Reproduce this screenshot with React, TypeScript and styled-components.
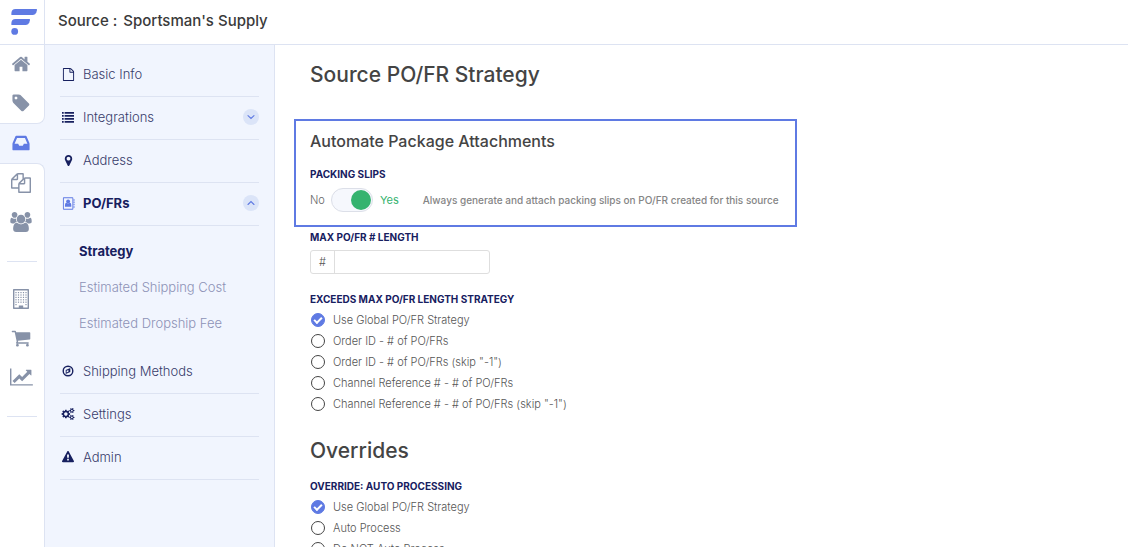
import React from "react";
import styled, { createGlobalStyle, css } from "styled-components";

const color = {
  brand: "#5f7ae3",
  navy: "#17205f",
  menu: "#383c6b",
  muted: "#8d92b6",
  rail: "#8792a8",
  panel: "#f1f5fe",
  line: "#dde3f2",
  heading: "#444444",
  text: "#555555",
  green: "#35b36f",
};

const GlobalStyle = createGlobalStyle`
  *, *::before, *::after { box-sizing: border-box; }
  body {
    margin: 0;
    background: #fff;
    color: ${color.text};
    font-family: Inter, "Liberation Sans", sans-serif;
    font-size: 11px;
    font-weight: 300;
    line-height: 16px;
  }
`;

/* ---------- icons ---------- */

const Glyph = styled.svg<{ $size: number; $ratio?: number }>`
  display: block;
  flex: none;
  height: ${(p) => p.$size}px;
  width: ${(p) => p.$size * (p.$ratio ?? 1)}px;
  fill: currentColor;
  overflow: visible;
`;

type IconProps = { size: number };

const path = (d: string, ratio = 1) =>
  function PathIcon({ size }: IconProps) {
    return (
      <Glyph $size={size} $ratio={ratio} viewBox={`0 0 ${1792 * ratio} 1792`} aria-hidden="true">
        <path d={d} fillRule="nonzero" />
      </Glyph>
    );
  };

const HomeIcon = path(
  "M1472 992v480q0 26-19 45t-45 19h-384v-384h-256v384h-384q-26 0-45-19t-19-45v-480q0-1 .5-3t.5-3l575-474 575 474q1 2 1 6zm223-69l-62 74q-8 9-21 11h-3q-13 0-21-7l-692-577-692 577q-12 8-24 7-13-2-21-11l-62-74q-8-10-7-23.5t11-21.5l719-599q32-26 76-26t76 26l244 204v-195q0-14 9-23t23-9h192q14 0 23 9t9 23v408l219 182q10 8 11 21.5t-7 23.5z"
);
const TagIcon = path(
  "M576 448q0-53-37.5-90.5t-90.5-37.5-90.5 37.5-37.5 90.5 37.5 90.5 90.5 37.5 90.5-37.5 37.5-90.5zm1067 576q0 53-37 90l-491 492q-39 37-91 37-53 0-90-37l-715-716q-38-37-64.5-101t-26.5-117v-416q0-52 38-90t90-38h416q53 0 117 26.5t102 64.5l715 714q37 39 37 91z"
);
const InboxIcon = path(
  "M1151 960h316q-1-3-2.5-8.5t-2.5-7.5l-212-496h-708l-212 496q-1 3-2.5 8.5t-2.5 7.5h316l95 192h320zm513 30v482q0 26-19 45t-45 19h-1408q-26 0-45-19t-19-45v-482q0-62 25-123l238-552q10-25 36.5-42t52.5-17h832q26 0 52.5 17t36.5 42l238 552q25 61 25 123z"
);
const FilesIcon = path(
  "M1696 384q40 0 68 28t28 68v1216q0 40-28 68t-68 28h-960q-40 0-68-28t-28-68v-288h-544q-40 0-68-28t-28-68v-672q0-40 20-88t48-76l408-408q28-28 76-48t88-20h416q40 0 68 28t28 68v328q68-40 128-40h416zm-544 213l-299 299h299v-299zm-640-384l-299 299h299v-299zm196 647l316-316v-416h-384v416q0 40-28 68t-68 28h-416v640h512v-256q0-40 20-88t48-76zm956 804v-1152h-384v416q0 40-28 68t-68 28h-416v640h896z"
);
const UsersIcon = path(
  "M529 896q-162 5-265 128h-134q-82 0-138-40.5t-56-118.5q0-353 124-353 6 0 43.5 21t97.5 42.5 119 21.5q67 0 133-23-5 37-5 66 0 139 81 256zm1071 637q0 120-73 189.5t-194 69.5h-874q-121 0-194-69.5t-73-189.5q0-53 3.5-103.5t14-109 26.5-108.5 43-97.5 62-81 85.5-53.5 111.5-20q10 0 43 21.5t73 48 107 48 135 21.5 135-21.5 107-48 73-48 43-21.5q61 0 111.5 20t85.5 53.5 62 81 43 97.5 26.5 108.5 14 109 3.5 103.5zm-1024-1277q0 106-75 181t-181 75-181-75-75-181 75-181 181-75 181 75 75 181zm704 384q0 159-112.5 271.5t-271.5 112.5-271.5-112.5-112.5-271.5 112.5-271.5 271.5-112.5 271.5 112.5 112.5 271.5zm576 225q0 78-56 118.5t-138 40.5h-134q-103-123-265-128 81-117 81-256 0-29-5-66 66 23 133 23 59 0 119-21.5t97.5-42.5 43.5-21q124 0 124 353zm-128-609q0 106-75 181t-181 75-181-75-75-181 75-181 181-75 181 75 75 181z"
);
const CartIcon = path(
  "M704 1536q0 52-38 90t-90 38-90-38-38-90 38-90 90-38 90 38 38 90zm896 0q0 52-38 90t-90 38-90-38-38-90 38-90 90-38 90 38 38 90zm128-1088v512q0 24-16.5 42.5t-40.5 21.5l-1044 122q13 60 13 70 0 16-24 64h920q26 0 45 19t19 45-19 45-45 19h-1024q-26 0-45-19t-19-45q0-11 8-31.5t16-36 21.5-40 15.5-29.5l-177-823h-204q-26 0-45-19t-19-45 19-45 45-19h256q16 0 28.5 6.5t19.5 15.5 13 24.5 8 26 5.5 29.5 4.5 26h1201q26 0 45 19t19 45z"
);
const ChartIcon = path(
  "M2048 1536v128h-2048v-1536h128v1408h1920zm-128-1248v435q0 21-19.5 29.5t-35.5-7.5l-121-121-633 633q-10 10-23 10t-23-10l-233-233-416 416-192-192 585-585q10-10 23-10t23 10l233 233 464-464-121-121q-16-16-7.5-35.5t29.5-19.5h435q14 0 23 9t9 23z",
  8 / 7
);
const FileIcon = path(
  "M1596 380q28 28 48 76t20 88v1152q0 40-28 68t-68 28h-1344q-40 0-68-28t-28-68v-1600q0-40 28-68t68-28h896q40 0 88 20t76 48zm-444-244v376h376q-10-29-22-41l-313-313q-12-12-41-22zm384 1528v-1024h-416q-40 0-68-28t-28-68v-416h-768v1536h1280z"
);
const MarkerIcon = path(
  "M1152 640q0-106-75-181t-181-75-181 75-75 181 75 181 181 75 181-75 75-181zm256 0q0 109-33 179l-364 774q-16 33-47.5 52t-67.5 19-67.5-19-46.5-52l-365-774q-33-70-33-179 0-212 150-362t362-150 362 150 150 362z"
);
const WarningIcon = path(
  "M1024 1375v-190q0-14-9.5-23.5t-22.5-9.5h-192q-13 0-22.5 9.5t-9.5 23.5v190q0 14 9.5 23.5t22.5 9.5h192q13 0 22.5-9.5t9.5-23.5zm-2-374l18-459q0-12-10-19-13-11-24-11h-220q-11 0-24 11-10 7-10 21l17 457q0 10 10 16.5t24 6.5h185q14 0 23.5-6.5t10.5-16.5zm-14-934l768 1408q35 63-2 126-17 29-46.5 46t-63.5 17h-1536q-34 0-63.5-17t-46.5-46q-37-63-2-126l768-1408q17-31 47-49t65-18 65 18 47 49z"
);

const smallCog =
  "v140q0 16-149 31-12 27-30 52 51 113 51 138 0 4-4 7-122 71-124 71-8 0-46-47t-52-68q-20 2-30 2t-30-2q-14 21-52 68t-46 47q-2 0-124-71-4-3-4-7 0-25 51-138-18-25-30-52-149-15-149-31v-140q0-16 149-31 13-29 30-52-51-113-51-138 0-4 4-7 4-2 35-20t59-34 30-16q8 0 46 46.5t52 67.5q20-2 30-2t30 2q51-71 92-112l6-2q4 0 124 70 4 3 4 7 0 25-51 138 17 23 30 52 149 15 149 31z";
const CogsIcon = path(
  "M832 896q0-106-75-181t-181-75-181 75-75 181 75 181 181 75 181-75 75-181zm768 512q0-52-38-90t-90-38-90 38-38 90q0 53 37.5 90.5t90.5 37.5 90.5-37.5 37.5-90.5zm0-1024q0-52-38-90t-90-38-90 38-38 90q0 53 37.5 90.5t90.5 37.5 90.5-37.5 37.5-90.5zm-384 421v185q0 10-7 19.5t-16 10.5l-155 24q-11 35-32 76 34 48 90 115 7 11 7 20 0 12-7 19-23 30-82.5 89.5t-78.5 59.5q-11 0-21-7l-115-90q-37 19-77 31-11 108-23 155-7 24-30 24h-186q-11 0-20-7.5t-10-17.5l-23-153q-34-10-75-31l-118 89q-7 7-20 7-11 0-21-8-144-133-144-160 0-9 7-19 10-14 41-53t47-61q-23-44-35-82l-152-24q-10-1-17-9.5t-7-19.5v-185q0-10 7-19.5t16-10.5l155-24q11-35 32-76-34-48-90-115-7-11-7-20 0-12 7-20 22-30 82-89t79-59q11 0 21 7l115 90q34-18 77-32 11-108 23-154 7-24 30-24h186q11 0 20 7.5t10 17.5l23 153q34 10 75 31l118-89q8-7 20-7 11 0 21 8 144 133 144 160 0 9-7 19-12 16-42 54t-45 60q23 48 34 82l152 23q10 2 17 10.5t7 19.5zm640 533" +
    smallCog +
    "m0-1024" +
    smallCog
);

function BuildingIcon({ size }: IconProps) {
  const cells = [];
  for (let row = 0; row < 6; row++) {
    for (let col = 0; col < 5; col++) {
      if (row === 5 && col > 0 && col < 4) continue;
      cells.push(<rect key={`${row}-${col}`} x={4.4 + col * 2.5} y={3 + row * 2.4} width="1.2" height="1.2" />);
    }
  }
  return (
    <Glyph $size={size} viewBox="0 0 20 20" aria-hidden="true">
      <path fillRule="evenodd" d="M2 .7Q2 0 2.7 0H17.3Q18 0 18 .7V19.3Q18 20 17.3 20H2.7Q2 20 2 19.3ZM3.4 1.4V18.6H7.8V16.4H12.2V18.6H16.6V1.4Z" />
      {cells}
    </Glyph>
  );
}

function ListIcon({ size }: IconProps) {
  return (
    <Glyph $size={size} viewBox="0 0 12 12" aria-hidden="true">
      {[1, 4, 7, 10].map((y) => (
        <path key={y} d={`M0 ${y}h1.7v1.8H0ZM2.6 ${y}H12v1.8H2.6Z`} />
      ))}
    </Glyph>
  );
}

function AddressBookIcon({ size }: IconProps) {
  return (
    <Glyph $size={size} viewBox="0 0 14 14" aria-hidden="true">
      <path fillRule="evenodd" d="M1 1.4Q1 .4 1.9 .4H11.2Q12.2 .4 12.2 1.4V12.6Q12.2 13.6 11.2 13.6H1.9Q1 13.6 1 12.6ZM2 1.4V12.6H11.2V1.4Z" />
      <path d="M12.4 2.4h1.1v1.6h-1.1ZM12.4 4.9h1.1v1.6h-1.1ZM12.4 7.4h1.1V9h-1.1ZM12.4 9.9h1.1v1.6h-1.1Z" />
      <circle cx="6.6" cy="4.8" r="2.1" />
      <path d="M3.2 10.4V8.6Q3.3 6.4 4.8 6.3Q6.6 7.6 8.4 6.3Q9.9 6.4 10 8.6V10.4Z" />
    </Glyph>
  );
}

function CompassIcon({ size }: IconProps) {
  return (
    <Glyph $size={size} viewBox="0 0 14 14" aria-hidden="true">
      <circle cx="7" cy="7" r="4.8" fill="none" stroke="currentColor" strokeWidth="1.4" />
      <path fillRule="evenodd" d="M9.3 4.1V7.9L4.7 9.9V6.1ZM5.6 8.5L7.4 7.7V6L5.6 6.8Z" />
    </Glyph>
  );
}

function Chevron({ up }: { up?: boolean }) {
  return (
    <Glyph $size={10} viewBox="0 0 10 10" aria-hidden="true">
      <path
        d={up ? "M2 6.5L5 3.6L8 6.5" : "M2 3.6L5 6.5L8 3.6"}
        fill="none"
        stroke={color.brand}
        strokeWidth="1.1"
        strokeLinecap="round"
      />
    </Glyph>
  );
}

function Logo() {
  return (
    <Glyph $size={28} viewBox="0 0 28 28" role="img" aria-label="Home">
      <g fill={color.brand}>
        <path d="M1.4 7V5Q1.6 1 5.5 1H26.4Q27.2 1 27 2L26.3 4.6Q25.6 7 23 7Z" />
        <path d="M1.4 17V15Q1.6 11 5.5 11H19.4Q20.2 11 20 12L19.3 14.6Q18.6 17 16 17Z" />
        <circle cx="4.7" cy="23.4" r="3.4" />
      </g>
    </Glyph>
  );
}

/* ---------- shell ---------- */

const Shell = styled.div`
  display: grid;
  grid-template: 45px minmax(0, 1fr) / 45px 230px minmax(0, 1fr);
  height: 100vh;
  overflow: hidden;
`;

const LogoLink = styled.a`
  display: flex;
  align-items: center;
  justify-content: flex-end;
  padding-right: 6px;
  border-right: 1px solid ${color.line};
  border-bottom: 1px solid ${color.line};
`;

const TopBar = styled.header`
  grid-column: 2 / -1;
  display: flex;
  align-items: center;
  padding: 0 13px 3px;
  border-bottom: 1px solid ${color.line};
`;

const SourceTitle = styled.div`
  display: flex;
  gap: 6px;
  color: #3a3a3a;
  font-size: 15px;
  font-weight: 500;
  line-height: 20px;
`;

const Rail = styled.nav`
  display: flex;
  flex-direction: column;
  background: ${color.panel};
`;

const RailGroup = styled.div<{ $place: "top" | "bottom" }>`
  display: flex;
  flex-direction: column;
  align-items: center;
  background: #fff;
  border-right: 1px solid ${color.line};
  ${(p) =>
    p.$place === "top"
      ? css`
          border-bottom: 1px solid ${color.line};
          border-bottom-right-radius: 8px;
        `
      : css`
          flex: 1;
          border-top: 1px solid ${color.line};
          border-top-right-radius: 8px;
        `}
`;

const RailLink = styled.a<{ $active?: boolean }>`
  display: flex;
  align-items: center;
  justify-content: center;
  width: 44px;
  height: 39px;
  padding: 0 2px 2px 0;
  color: ${(p) => (p.$active ? color.brand : color.rail)};
`;

const RailRule = styled.hr`
  width: 30px;
  height: 1px;
  margin: 19px 0 18px;
  border: 0;
  background: ${color.line};
`;

const SideMenu = styled.nav`
  padding: 9px 15px;
  background: ${color.panel};
  border-right: 1px solid ${color.line};
`;

const MenuItem = styled.a<{ $active?: boolean }>`
  display: flex;
  align-items: center;
  height: 43px;
  padding: 0 0 2px 1px;
  border-bottom: 1px solid ${color.line};
  color: ${(p) => (p.$active ? color.navy : color.menu)};
  font-size: 13px;
  font-weight: ${(p) => (p.$active ? 700 : 300)};
  line-height: 20px;
  text-decoration: none;
`;

const IconSlot = styled.span<{ $active?: boolean }>`
  display: flex;
  justify-content: center;
  width: 14px;
  margin-right: 8px;
  color: ${(p) => (p.$active ? color.brand : color.navy)};
`;

const Bubble = styled.span`
  display: flex;
  align-items: center;
  justify-content: center;
  width: 16px;
  height: 16px;
  margin-left: auto;
  border-radius: 50%;
  background: #dbe4f8;
`;

const SubMenu = styled.div`
  display: flex;
  flex-direction: column;
  padding: 7px 0 10px 19px;
`;

const SubLink = styled.a<{ $active?: boolean }>`
  font-size: 13px;
  line-height: 36px;
  font-weight: ${(p) => (p.$active ? 700 : 300)};
  color: ${(p) => (p.$active ? color.navy : color.muted)};
  text-decoration: none;
`;

/* ---------- content ---------- */

const Content = styled.main`
  padding: 15px 19px;
  overflow: auto;
  scrollbar-width: none;
`;

const PageTitle = styled.h1`
  margin: 0 0 29px;
  padding-left: 16px;
  color: ${color.heading};
  font-size: 21px;
  font-weight: 500;
  line-height: 30px;
`;

const Highlight = styled.section`
  width: fit-content;
  margin-bottom: 2px;
  padding: 9px 16px 13px 14px;
  border: 2px solid ${color.brand};
`;

const HighlightTitle = styled.h2`
  margin: 0 0 14px;
  color: ${color.heading};
  font-size: 16px;
  font-weight: 500;
  line-height: 22px;
`;

const Form = styled.form`
  padding-left: 16px;
`;

const labelText = css`
  display: block;
  padding: 0;
  color: ${color.navy};
  font-size: 10px;
  font-weight: 700;
  line-height: 16px;
`;

const FieldName = styled.label`
  ${labelText}
`;

const GroupName = styled.legend`
  ${labelText}
  margin-bottom: 2px;
`;

const ToggleRow = styled.div`
  display: flex;
  align-items: center;
  height: 24px;
  margin-top: 6px;
  color: #666;
`;

const Switch = styled.input`
  appearance: none;
  display: flex;
  align-items: center;
  width: 42px;
  height: 24px;
  margin: 0 7px 0 6px;
  padding: 0 1px;
  border: 1px solid #dcdfe8;
  border-radius: 12px;
  background: #f6f8fd;

  &::before {
    content: "";
    width: 20px;
    height: 20px;
    border-radius: 50%;
    background: #b5bac6;
  }

  &:checked::before {
    margin-left: auto;
    background: ${color.green};
  }
`;

const OnText = styled.span`
  margin-right: 24px;
  color: ${color.green};
  font-weight: 400;
`;

const Hint = styled.span`
  color: #858585;
  font-size: 10px;
  font-weight: 500;
`;

const InputGroup = styled.div`
  display: flex;
  width: 180px;
  height: 24px;
  margin: 5px 0 17px;
  border: 1px solid #dedede;
  border-radius: 3px;
`;

const Prefix = styled.span`
  width: 24px;
  border-right: 1px solid #dedede;
  line-height: 22px;
  text-align: center;
`;

const TextInput = styled.input`
  flex: 1;
  min-width: 0;
  padding: 0 8px;
  border: 0;
  background: transparent;
  font: inherit;
  outline: none;
`;

const Options = styled.fieldset`
  margin: 0;
  padding: 0;
  border: 0;
`;

const Option = styled.label`
  display: flex;
  align-items: center;
  gap: 8px;
  height: 21px;
  padding-left: 1px;
`;

const Radio = styled.input`
  appearance: none;
  display: flex;
  justify-content: center;
  width: 14px;
  height: 14px;
  margin: 0;
  border: 1px solid #444;
  border-radius: 50%;

  &:checked {
    border-color: ${color.brand};
    background: ${color.brand};
  }

  &:checked::before {
    content: "";
    width: 8px;
    height: 5px;
    margin-top: 3px;
    border: solid #fff;
    border-width: 0 0 2px 2px;
    transform: rotate(-45deg);
  }
`;

const SectionTitle = styled.h2`
  margin: 22px 0 12px;
  color: ${color.heading};
  font-size: 21px;
  font-weight: 500;
  line-height: 30px;
`;

function RadioGroup({ name, title, options }: { name: string; title: string; options: string[] }) {
  return (
    <Options>
      <GroupName>{title}</GroupName>
      {options.map((option, i) => (
        <Option key={option}>
          <Radio type="radio" name={name} defaultChecked={i === 0} />
          {option}
        </Option>
      ))}
    </Options>
  );
}

export default function App() {
  return (
    <>
      <GlobalStyle />
      <Shell>
        <LogoLink href="#">
          <Logo />
        </LogoLink>
        <TopBar>
          <SourceTitle>
            <span>Source :</span>
            <span>Sportsman's Supply</span>
          </SourceTitle>
        </TopBar>

        <Rail aria-label="Main">
          <RailGroup $place="top">
            <RailLink href="#" aria-label="Dashboard"><HomeIcon size={20} /></RailLink>
            <RailLink href="#" aria-label="Products"><TagIcon size={20} /></RailLink>
          </RailGroup>
          <RailLink href="#" aria-label="Sources" $active><InboxIcon size={20} /></RailLink>
          <RailGroup $place="bottom">
            <RailLink href="#" aria-label="Orders"><FilesIcon size={20} /></RailLink>
            <RailLink href="#" aria-label="Customers"><UsersIcon size={20} /></RailLink>
            <RailRule />
            <RailLink href="#" aria-label="Company"><BuildingIcon size={20} /></RailLink>
            <RailLink href="#" aria-label="Cart"><CartIcon size={20} /></RailLink>
            <RailLink href="#" aria-label="Reports"><ChartIcon size={20} /></RailLink>
            <RailRule />
          </RailGroup>
        </Rail>

        <SideMenu aria-label="Source">
          <MenuItem href="#"><IconSlot><FileIcon size={13} /></IconSlot>Basic Info</MenuItem>
          <MenuItem href="#">
            <IconSlot><ListIcon size={12} /></IconSlot>Integrations<Bubble><Chevron /></Bubble>
          </MenuItem>
          <MenuItem href="#"><IconSlot><MarkerIcon size={13} /></IconSlot>Address</MenuItem>
          <MenuItem href="#" $active>
            <IconSlot $active><AddressBookIcon size={13} /></IconSlot>PO/FRs<Bubble><Chevron up /></Bubble>
          </MenuItem>
          <SubMenu>
            <SubLink href="#" $active>Strategy</SubLink>
            <SubLink href="#">Estimated Shipping Cost</SubLink>
            <SubLink href="#">Estimated Dropship Fee</SubLink>
          </SubMenu>
          <MenuItem href="#"><IconSlot><CompassIcon size={14} /></IconSlot>Shipping Methods</MenuItem>
          <MenuItem href="#"><IconSlot><CogsIcon size={12} /></IconSlot>Settings</MenuItem>
          <MenuItem href="#"><IconSlot><WarningIcon size={12} /></IconSlot>Admin</MenuItem>
        </SideMenu>

        <Content>
          <PageTitle>Source PO/FR Strategy</PageTitle>
          <Highlight>
            <HighlightTitle>Automate Package Attachments</HighlightTitle>
            <FieldName htmlFor="packing-slips">PACKING SLIPS</FieldName>
            <ToggleRow>
              <span>No</span>
              <Switch id="packing-slips" type="checkbox" role="switch" defaultChecked />
              <OnText>Yes</OnText>
              <Hint>Always generate and attach packing slips on PO/FR created for this source</Hint>
            </ToggleRow>
          </Highlight>
          <Form>
            <FieldName htmlFor="max-length">MAX PO/FR # LENGTH</FieldName>
            <InputGroup>
              <Prefix>#</Prefix>
              <TextInput id="max-length" type="text" />
            </InputGroup>
            <RadioGroup
              name="exceeds"
              title="EXCEEDS MAX PO/FR LENGTH STRATEGY"
              options={[
                "Use Global PO/FR Strategy",
                "Order ID - # of PO/FRs",
                'Order ID - # of PO/FRs (skip "-1")',
                "Channel Reference # - # of PO/FRs",
                'Channel Reference # - # of PO/FRs (skip "-1")',
              ]}
            />
            <SectionTitle>Overrides</SectionTitle>
            <RadioGroup
              name="auto-processing"
              title="OVERRIDE: AUTO PROCESSING"
              options={["Use Global PO/FR Strategy", "Auto Process", "Do NOT Auto Process"]}
            />
          </Form>
        </Content>
      </Shell>
    </>
  );
}
